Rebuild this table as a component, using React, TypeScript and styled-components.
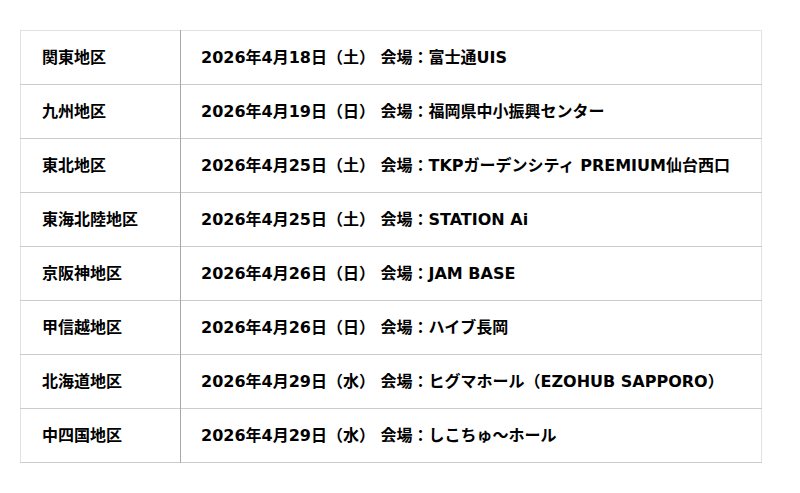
import React from "react";
import styled, { createGlobalStyle } from "styled-components";

const Global = createGlobalStyle`
  html, body { margin: 0; padding: 0; background: #ffffff; }
`;

const Page = styled.div`
  padding: 30px 38px 30px 20px;
  font-family: "DejaVu Sans", "Noto Sans CJK JP", sans-serif;
  color: #000000;
`;

const Table = styled.table`
  width: 742px;
  border-collapse: collapse;
  border-top: 1px solid #e2e2e2;
  border-left: 1px solid #e2e2e2;
  border-right: 1px solid #e2e2e2;
`;

const Row = styled.tr`
  height: 54px;
  border-bottom: 1px solid #cccccc;
`;

const Region = styled.th`
  width: 160px;
  box-sizing: border-box;
  padding: 0 0 4px 21px;
  text-align: left;
  vertical-align: middle;
  font-size: 16px;
  font-weight: bold;
  border-right: 1px solid #a8a8a8;
  white-space: nowrap;
`;

const Info = styled.td`
  padding: 0 0 4px 20px;
  text-align: left;
  vertical-align: middle;
  font-size: 16px;
  font-weight: bold;
  white-space: nowrap;
`;

const rows: [string, string][] = [
  ["関東地区", "2026年4月18日（土） 会場：富士通UIS"],
  ["九州地区", "2026年4月19日（日） 会場：福岡県中小振興センター"],
  ["東北地区", "2026年4月25日（土） 会場：TKPガーデンシティ PREMIUM仙台西口"],
  ["東海北陸地区", "2026年4月25日（土） 会場：STATION Ai"],
  ["京阪神地区", "2026年4月26日（日） 会場：JAM BASE"],
  ["甲信越地区", "2026年4月26日（日） 会場：ハイブ長岡"],
  ["北海道地区", "2026年4月29日（水） 会場：ヒグマホール（EZOHUB SAPPORO）"],
  ["中四国地区", "2026年4月29日（水） 会場：しこちゅ～ホール"],
];

export default function App() {
  return (
    <>
      <Global />
      <Page>
        <Table>
          <tbody>
            {rows.map(([region, info]) => (
              <Row key={region}>
                <Region>{region}</Region>
                <Info>{info}</Info>
              </Row>
            ))}
          </tbody>
        </Table>
      </Page>
    </>
  );
}
